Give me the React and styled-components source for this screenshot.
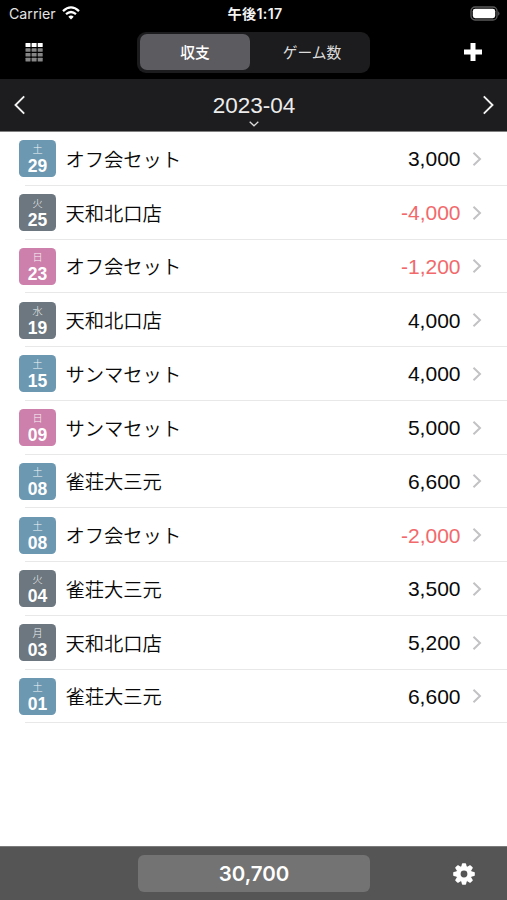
import React from 'react';
import styled, { createGlobalStyle } from 'styled-components';

const GlobalStyle = createGlobalStyle`
  * { box-sizing: border-box; }
  body { margin: 0; background: #fff; }
`;

const sf = `Inter, "Noto Sans CJK JP", sans-serif`;
const helvetica = `"Liberation Sans", "Noto Sans CJK JP", sans-serif`;

const Screen = styled.div`
  width: 507px;
  height: 900px;
  display: flex;
  flex-direction: column;
  overflow: hidden;
  background: #fff;
  font-family: ${helvetica};
`;

const StatusBar = styled.header`
  height: 27px;
  padding: 0 6px 0 9px;
  display: grid;
  grid-template-columns: 1fr auto 1fr;
  align-items: center;
  background: #000;
  color: #e4e4e4;
  font: 400 14.2px/27px ${sf};
`;

const Carrier = styled.div`
  display: flex;
  align-items: center;
  gap: 6px;

  svg { margin-top: -2px; }
`;

const Clock = styled.div`
  font-weight: 600;
  font-size: 14.2px;
  letter-spacing: 0.35px;
  color: #f4f4f4;
`;

const BatteryIcon = styled.svg`
  justify-self: end;
  display: block;
`;

const NavBar = styled.nav`
  height: 52px;
  padding: 5px 24px 0;
  display: grid;
  grid-template-columns: 1fr 233px 1fr;
  align-items: start;
  background: #000;
`;

const IconButton = styled.button`
  width: 20px;
  height: 40px;
  padding: 0;
  border: 0;
  background: none;
  display: flex;
  align-items: center;
  justify-content: center;
  justify-self: ${({ $end }) => ($end ? 'end' : 'start')};
`;

const Segmented = styled.div`
  height: 41px;
  padding: 2px 0 2px 3px;
  display: grid;
  grid-template-columns: 110px 1fr;
  border-radius: 9px;
  background: #1c1c1e;
`;

const Segment = styled.button`
  height: 36px;
  padding: 0 0 0 ${({ $active }) => ($active ? 0 : '4px')};
  border: 0;
  border-radius: 7px;
  background: ${({ $active }) => ($active ? '#5c5b60' : 'transparent')};
  color: ${({ $active }) => ($active ? '#fff' : '#dcdcdc')};
  font: ${({ $active }) => ($active ? 500 : 400)} 14.8px/34px "Noto Sans CJK JP", sans-serif;
`;

const MonthBar = styled.div`
  height: 53px;
  padding: 0 12px 0 13px;
  display: flex;
  align-items: center;
  justify-content: space-between;
  background: #1d1d1f;
  border-bottom: 1px solid #808080;
`;

const Month = styled.div`
  display: flex;
  flex-direction: column;
  align-items: center;
  padding-top: 7px;
  color: #ececec;
  font: 400 22.5px/30px ${helvetica};
`;

const Rows = styled.ul`
  flex: 1;
  margin: 0;
  padding: 0;
  list-style: none;
`;

const Row = styled.li`
  height: 53.75px;
  padding-left: 19px;
  display: flex;
  align-items: center;
  background: linear-gradient(#e8e8e9, #e8e8e9) 25px 100% / 100% 1px no-repeat;
`;

const badgeColors = { weekday: '#6c777f', sat: '#6c98b2', sun: '#cd80ab' };

const DateBadge = styled.div`
  width: 37px;
  height: 37px;
  flex: none;
  border-radius: 4.5px;
  background: ${({ $kind }) => badgeColors[$kind]};
  color: #fff;
  display: flex;
  flex-direction: column;
  align-items: center;
`;

const Weekday = styled.span`
  font: 300 10.2px/18px "Noto Sans CJK JP", sans-serif;
  opacity: 0.9;
`;

const Day = styled.span`
  font: 700 17.5px/16px ${helvetica};
`;

const Place = styled.span`
  flex: 1;
  padding-left: 9.5px;
  color: #080808;
  font: 350 19.3px/28px "Noto Sans CJK JP", sans-serif;
`;

const Amount = styled.span`
  color: ${({ $negative }) => ($negative ? '#f2696b' : '#0a0a0a')};
  font: 400 21px/28px ${helvetica};
  padding-top: 1px;
`;

const RowChevron = styled.svg`
  margin: 0 25px 0 11.5px;
`;

const Footer = styled.footer`
  height: 54px;
  padding: 0 32px 0 24px;
  display: grid;
  grid-template-columns: 114px 232px 1fr;
  align-items: center;
  background: #555;
  border-top: 1px solid #7b7b7b;
`;

const Total = styled.div`
  grid-column: 2;
  height: 37px;
  border-radius: 6px;
  background: #737373;
  color: #fff;
  text-align: center;
  font: 600 20.5px/37px ${sf};
`;

const SettingsButton = styled(IconButton)`
  width: 22px;
`;

const entries = [
  ['土', '29', 'sat', 'オフ会セット', '3,000'],
  ['火', '25', 'weekday', '天和北口店', '-4,000'],
  ['日', '23', 'sun', 'オフ会セット', '-1,200'],
  ['水', '19', 'weekday', '天和北口店', '4,000'],
  ['土', '15', 'sat', 'サンマセット', '4,000'],
  ['日', '09', 'sun', 'サンマセット', '5,000'],
  ['土', '08', 'sat', '雀荘大三元', '6,600'],
  ['土', '08', 'sat', 'オフ会セット', '-2,000'],
  ['火', '04', 'weekday', '雀荘大三元', '3,500'],
  ['月', '03', 'weekday', '天和北口店', '5,200'],
  ['土', '01', 'sat', '雀荘大三元', '6,600'],
];

const Wifi = () => (
  <svg width="18" height="14" viewBox="0 0 18 14" fill="none" stroke="#fff">
    <path d="M1 5.1 Q9 -2.3 17 5.1" strokeWidth="2.3" />
    <path d="M4 8.2 Q9 3.8 14 8.2" strokeWidth="2.2" />
    <path d="M6.3 10.7 Q9 8.4 11.7 10.7 L9 13.5 Z" fill="#fff" stroke="none" />
  </svg>
);

const Battery = () => (
  <BatteryIcon width="31" height="15" viewBox="0 0 31 15">
    <rect x="1" y="1" width="26" height="13" rx="4" fill="none" stroke="#59595b" strokeWidth="1.3" />
    <rect x="2.8" y="2.8" width="22.4" height="9.4" rx="2.4" fill="#fff" />
    <path d="M28.4 5.2 Q30.4 7.5 28.4 9.8 Z" fill="#77777a" />
  </BatteryIcon>
);

const gridRows = [
  [1, 4, '#fff'],
  [6.2, 3.6, '#858585'],
  [11, 3.6, '#858585'],
  [15.8, 3.6, '#858585'],
];

const GridIcon = () => (
  <svg width="20" height="20" viewBox="0 0 20 20">
    {gridRows.map(([y, h, fill]) =>
      [1.5, 7.6, 13.7].map((x) => (
        <rect key={`${x}-${y}`} x={x} y={y} width="5" height={h} rx="0.5" fill={fill} />
      ))
    )}
  </svg>
);

const Gear = () => (
  <svg width="22" height="22" viewBox="-11 -11 22 22" fill="#fff">
    {[0, 45, 90, 135, 180, 225, 270, 315].map((angle) => (
      <path
        key={angle}
        d="M-2.8 -7 L-2.1 -10.1 Q-2 -10.8 -1.3 -10.8 H1.3 Q2 -10.8 2.1 -10.1 L2.8 -7 Z"
        transform={`rotate(${angle})`}
      />
    ))}
    <circle r="5.65" fill="none" stroke="#fff" strokeWidth="4.5" />
  </svg>
);

export default function App() {
  return (
    <Screen>
      <GlobalStyle />
      <StatusBar>
        <Carrier>
          <span>Carrier</span>
          <Wifi />
        </Carrier>
        <Clock>午後1:17</Clock>
        <Battery />
      </StatusBar>
      <NavBar>
        <IconButton aria-label="一覧">
          <GridIcon />
        </IconButton>
        <Segmented>
          <Segment $active>収支</Segment>
          <Segment>ゲーム数</Segment>
        </Segmented>
        <IconButton $end aria-label="追加">
          <svg width="18" height="18" viewBox="0 0 18 18">
            <path d="M9 0V18M0 9H18" stroke="#fff" strokeWidth="5" />
          </svg>
        </IconButton>
      </NavBar>
      <MonthBar>
        <svg width="14" height="20" viewBox="0 0 14 20" fill="none" stroke="#f2f2f2" strokeWidth="1.9">
          <path d="M11.2 1.3 L2.5 10 L11.2 18.7" />
        </svg>
        <Month>
          2023-04
          <svg width="10" height="6" viewBox="0 0 10 6" fill="none" stroke="#ddd" strokeWidth="1.3">
            <path d="M0.7 0.7 L5 4.8 L9.3 0.7" />
          </svg>
        </Month>
        <svg width="14" height="20" viewBox="0 0 14 20" fill="none" stroke="#f2f2f2" strokeWidth="1.9">
          <path d="M2.8 1.3 L11.5 10 L2.8 18.7" />
        </svg>
      </MonthBar>
      <Rows>
        {entries.map(([weekday, day, kind, place, amount], i) => (
          <Row key={i}>
            <DateBadge $kind={kind}>
              <Weekday>{weekday}</Weekday>
              <Day>{day}</Day>
            </DateBadge>
            <Place>{place}</Place>
            <Amount $negative={amount.startsWith('-')}>{amount}</Amount>
            <RowChevron width="10" height="14" viewBox="0 0 10 14" fill="none" stroke="#c2c2c5" strokeWidth="2">
              <path d="M1.5 0.8 L8 7 L1.5 13.2" />
            </RowChevron>
          </Row>
        ))}
      </Rows>
      <Footer>
        <Total>30,700</Total>
        <SettingsButton $end aria-label="設定">
          <Gear />
        </SettingsButton>
      </Footer>
    </Screen>
  );
}
